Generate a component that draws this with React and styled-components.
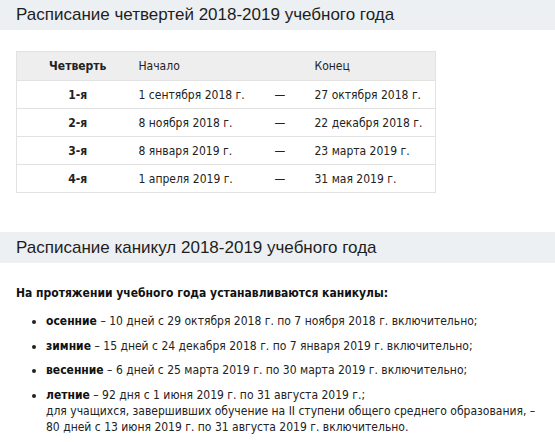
import styled, { createGlobalStyle } from "styled-components";

const GlobalStyle = createGlobalStyle`
  body {
    margin: 0;
    background: #fff;
    font-family: Tahoma, "DejaVu Sans Condensed", "DejaVu Sans", sans-serif;
    font-size: 12px;
    color: #222;
  }
`;

const Page = styled.div`
  width: 555px;
  padding-bottom: 8px;
`;

const Heading = styled.h2`
  margin: ${(props) => props.$top || 0}px 0 0;
  height: ${(props) => props.$height || 30}px;
  display: flex;
  align-items: center;
  padding-left: 16px;
  background: #edf0f3;
  font-family: "Liberation Sans", Arial, sans-serif;
  font-weight: 400;
  font-size: 17px;
  color: #1e1e1e;
`;

const Table = styled.table`
  margin: 21px 0 0 16px;
  width: 419px;
  border-collapse: collapse;
  border: 1px solid #e2e2e2;
  table-layout: fixed;
`;

const Th = styled.th`
  height: 28px;
  padding: 0 0 0 12px;
  background: #eeeeee;
  font-weight: ${(props) => (props.$bold ? 700 : 400)};
  text-align: ${(props) => (props.$center ? "center" : "left")};
  color: #222;
`;

const Td = styled.td`
  height: 27px;
  padding: 0 0 0 12px;
  border-top: 1px solid #e2e2e2;
  font-weight: ${(props) => (props.$bold ? 700 : 400)};
  text-align: ${(props) => (props.$center ? "center" : "left")};
  color: #222;
`;

const Intro = styled.p`
  margin: 22px 0 0 16px;
  line-height: 16px;
  font-weight: 700;
  color: #111;
`;

const List = styled.ul`
  margin: 12px 0 0;
  padding: 0 0 0 46px;
  list-style: disc;
`;

const Item = styled.li`
  margin-bottom: 8.5px;
  line-height: 16px;
  color: #222;

  b {
    color: #111;
  }
`;

const quarters = [
  ["1-я", "1 сентября 2018 г.", "27 октября 2018 г."],
  ["2-я", "8 ноября 2018 г.", "22 декабря 2018 г."],
  ["3-я", "8 января 2019 г.", "23 марта 2019 г."],
  ["4-я", "1 апреля 2019 г.", "31 мая 2019 г."],
];

export default function App() {
  return (
    <Page>
      <GlobalStyle />
      <Heading>Расписание четвертей 2018-2019 учебного года</Heading>
      <Table>
        <colgroup>
          <col style={{ width: 110 }} />
          <col style={{ width: 136 }} />
          <col style={{ width: 40 }} />
          <col style={{ width: 133 }} />
        </colgroup>
        <thead>
          <tr>
            <Th $bold $center>
              Четверть
            </Th>
            <Th>Начало</Th>
            <Th></Th>
            <Th>Конец</Th>
          </tr>
        </thead>
        <tbody>
          {quarters.map(([n, start, end]) => (
            <tr key={n}>
              <Td $bold $center>
                {n}
              </Td>
              <Td>{start}</Td>
              <Td>—</Td>
              <Td>{end}</Td>
            </tr>
          ))}
        </tbody>
      </Table>
      <Heading $top={39} $height={31}>
        Расписание каникул 2018-2019 учебного года
      </Heading>
      <Intro>На протяжении учебного года устанавливаются каникулы:</Intro>
      <List>
        <Item>
          <b>осенние</b> – 10 дней с 29 октября 2018 г. по 7 ноября 2018 г.
          включительно;
        </Item>
        <Item>
          <b>зимние</b> – 15 дней с 24 декабря 2018 г. по 7 января 2019 г.
          включительно;
        </Item>
        <Item>
          <b>весенние</b> – 6 дней с 25 марта 2019 г. по 30 марта 2019 г.
          включительно;
        </Item>
        <Item>
          <b>летние</b> – 92 дня с 1 июня 2019 г. по 31 августа 2019 г.;
          <br />
          для учащихся, завершивших обучение на II ступени общего среднего
          образования, –<br />
          80 дней с 13 июня 2019 г. по 31 августа 2019 г. включительно.
        </Item>
      </List>
    </Page>
  );
}
